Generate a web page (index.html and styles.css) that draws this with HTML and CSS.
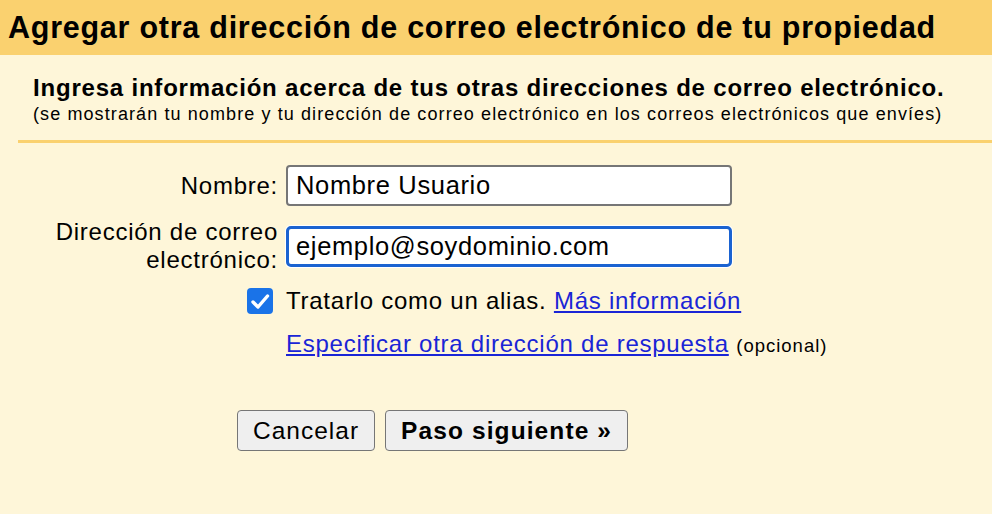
FILE: index.html
```html
<!DOCTYPE html>
<html lang="es">
<head>
  <meta charset="UTF-8" />
  <title>Agregar otra dirección de correo electrónico</title>
  <link rel="stylesheet" href="styles.css">
</head>
<body>
  <div class="header">
    <h1>Agregar otra dirección de correo electrónico de tu propiedad</h1>
  </div>

  <div class="content">
    <div class="intro">
      <h2>Ingresa información acerca de tus otras direcciones de correo electrónico.</h2>
      <p>(se mostrarán tu nombre y tu dirección de correo electrónico en los correos electrónicos que envíes)</p>
    </div>
    <div class="sep"></div>

    <div class="form">
      <label class="lbl" for="nombre">Nombre:</label>
      <input class="field" id="nombre" type="text" value="Nombre Usuario" />

      <label class="lbl lbl-two" for="correo">Dirección de correo electrónico:</label>
      <input class="field focused" id="correo" type="text" value="ejemplo@soydominio.com" />

      <div class="check">
        <svg width="26" height="26" viewBox="0 0 26 26">
          <rect x="0" y="0" width="26" height="26" rx="4" fill="#1a73e8"/>
          <path d="M6 14 L11 19 L20.5 8" fill="none" stroke="#fff" stroke-width="3.4" stroke-linecap="round" stroke-linejoin="round"/>
        </svg>
      </div>
      <div class="opt">Tratarlo como un alias. <a href="#">Más información</a></div>

      <div></div>
      <div class="opt reply"><a href="#">Especificar otra dirección de respuesta</a> <span class="small">(opcional)</span></div>
    </div>

    <div class="actions">
      <button class="btn">Cancelar</button>
      <button class="btn primary">Paso siguiente »</button>
    </div>
  </div>
</body>
</html>
```

FILE: styles.css
```css
html, body {
  margin: 0;
  padding: 0;
  height: 100%;
}
body {
  background: #fef6d9;
  font-family: "Liberation Sans", Arial, sans-serif;
  color: #000;
}
.header {
  background: #fad16f;
  height: 55px;
  padding-left: 8px;
}
.header h1 {
  margin: 0;
  font-size: 30.5px;
  letter-spacing: 0.75px;
  line-height: 55px;
  font-weight: bold;
  white-space: nowrap;
}
.intro {
  padding: 18px 0 0 33px;
}
.intro h2 {
  margin: 0;
  font-size: 24px;
  letter-spacing: 0.8px;
  line-height: 30px;
  font-weight: bold;
  white-space: nowrap;
}
.intro p {
  margin: 0;
  font-size: 18px;
  letter-spacing: 1.1px;
  line-height: 22px;
  white-space: nowrap;
}
.sep {
  margin: 15px 0 0 18px;
  height: 3px;
  background: #fad16f;
}
.form {
  display: grid;
  grid-template-columns: 260px 446px;
  column-gap: 8px;
  row-gap: 12px;
  padding: 22px 0 0 18px;
  align-items: center;
}
.lbl {
  text-align: right;
  font-size: 24px;
  letter-spacing: 0.75px;
  line-height: 28px;
}
.lbl-two {
  padding-left: 20px;
}
.field {
  box-sizing: border-box;
  height: 41px;
  width: 446px;
  margin: 0;
  border: 2px solid #767676;
  border-radius: 4px;
  background: #fff;
  font-family: "Liberation Sans", Arial, sans-serif;
  font-size: 25.5px;
  letter-spacing: 0.65px;
  padding: 0 8px;
  color: #000;
}
.field.focused {
  border: 3px solid #1b63d1;
  border-radius: 5px;
  box-shadow: 0 0 0 1px #fff;
  padding: 0 7px;
  outline: none;
}
.check {
  padding-right: 5px;
  height: 26px;
}
.check svg {
  display: block;
  margin-left: auto;
}
.opt {
  font-size: 24px;
  letter-spacing: 0.75px;
  line-height: 29px;
  white-space: nowrap;
}
.opt a {
  color: #1a25d6;
  text-decoration: underline;
}
.reply {
  margin-top: 2px;
}
.small {
  font-size: 18.5px;
  letter-spacing: 1px;
}
.actions {
  padding: 50px 0 0 237px;
  display: flex;
  gap: 10px;
}
.btn {
  height: 41px;
  padding: 0 15px;
  background: #efefef;
  border: 1.5px solid #767676;
  border-radius: 4px;
  font-family: "Liberation Sans", Arial, sans-serif;
  font-size: 24.5px;
  letter-spacing: 1px;
  color: #000;
}
.btn.primary {
  font-weight: bold;
  letter-spacing: 1.1px;
}
```
